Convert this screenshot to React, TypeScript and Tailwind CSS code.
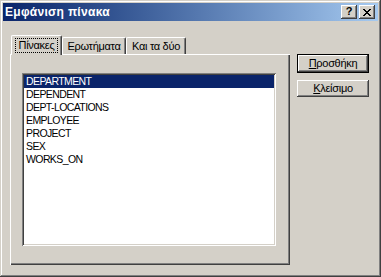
const rows = [
  'DEPARTMENT',
  'DEPENDENT',
  'DEPT-LOCATIONS',
  'EMPLOYEE',
  'PROJECT',
  'SEX',
  'WORKS_ON',
];

const raised =
  'shadow-[inset_-1px_-1px_#404040,inset_1px_1px_#ffffff,inset_-2px_-2px_#808080,inset_2px_2px_#d4d0c8]';

function CaptionButton({ children }: { children: React.ReactNode }) {
  return (
    <div className={`w-[16px] h-[14px] bg-[#d4d0c8] flex items-center justify-center ${raised}`}>
      {children}
    </div>
  );
}

export default function App() {
  return (
    <div className="w-[381px] h-[277px] bg-[#d4d0c8] p-[3px] flex flex-col font-['Liberation_Sans',Arial,sans-serif] text-black shadow-[inset_-1px_-1px_#404040,inset_1px_1px_#d4d0c8,inset_-2px_-2px_#808080,inset_2px_2px_#ffffff]">
      {/* Title bar */}
      <div className="h-[18px] flex items-center bg-gradient-to-r from-[#0a246a] to-[#a6caf0] pl-[2px] pr-[3px]">
        <span className="text-white font-bold text-[12px] tracking-[0.3px] leading-none">
          Εμφάνιση πίνακα
        </span>
        <div className="ml-auto flex gap-[2px]">
          <CaptionButton>
            <span className="text-[11px] font-bold leading-none -mt-px">?</span>
          </CaptionButton>
          <CaptionButton>
            <svg width="8" height="7" viewBox="0 0 8 7" shapeRendering="crispEdges">
              <path d="M0 0h2v1h-2zM6 0h2v1h-2zM1 1h2v1h-2zM5 1h2v1h-2zM2 2h4v1h-4zM3 3h2v1h-2zM2 4h4v1h-4zM1 5h2v1h-2zM5 5h2v1h-2zM0 6h2v1h-2zM6 6h2v1h-2z" fill="#000" />
            </svg>
          </CaptionButton>
        </div>
      </div>

      {/* Body */}
      <div className="flex pl-[7px] pt-[14px]">
        <div className="w-[280px] flex flex-col">
          {/* Tabs */}
          <div className="h-[20px] flex items-end pl-[1px] text-[11px] tracking-[-0.3px] leading-none">
            <div className="relative z-10 w-[51px] h-[20px] bg-[#d4d0c8] border-t border-l border-r border-t-white border-l-white border-r-[#404040] rounded-t-[2px] shadow-[inset_-1px_0_#808080] flex justify-center pt-[2px]">
              <span className="h-[15px] px-[3px] border border-dotted border-black flex items-center">
                Πίνακες
              </span>
            </div>
            <div className="w-[64px] h-[18px] border-t border-l border-r border-t-white border-l-white border-r-[#404040] rounded-t-[2px] shadow-[inset_-1px_0_#808080] flex justify-center pt-[3px]">
              Ερωτήματα
            </div>
            <div className="w-[60px] h-[18px] border-t border-l border-r border-t-white border-l-white border-r-[#404040] rounded-t-[2px] shadow-[inset_-1px_0_#808080] flex justify-center pt-[3px]">
              Και τα δύο
            </div>
          </div>

          {/* Panel */}
          <div className="-mt-px h-[211px] bg-[#d4d0c8] pl-[12px] pt-[19px] shadow-[inset_1px_1px_#ffffff,inset_-1px_-1px_#404040,inset_-2px_-2px_#808080]">
            <div className="w-[254px] h-[173px] bg-white p-[2px] shadow-[inset_1px_1px_#808080,inset_-1px_-1px_#ffffff,inset_2px_2px_#404040,inset_-2px_-2px_#d4d0c8]">
              {rows.map((r, i) => (
                <div
                  key={r}
                  className={`h-[13px] pl-[2px] flex items-center text-[10.5px] tracking-[-0.6px] leading-none ${
                    i === 0 ? 'bg-[#0a246a] text-white' : 'text-black'
                  }`}
                >
                  {r}
                </div>
              ))}
            </div>
          </div>
        </div>

        {/* Buttons */}
        <div className="ml-[7px] pt-[19px] flex flex-col text-[11px] tracking-[-0.3px] leading-none">
          <div className="w-[72px] h-[19px] border border-black bg-[#d4d0c8] flex items-center justify-center shadow-[inset_-1px_-1px_#404040,inset_1px_1px_#ffffff,inset_-2px_-2px_#808080]">
            <span>
              <span className="underline">Π</span>ροσθήκη
            </span>
          </div>
          <div className={`mt-[7px] w-[72px] h-[17px] bg-[#d4d0c8] flex items-center justify-center ${raised}`}>
            <span>
              <span className="underline">Κ</span>λείσιμο
            </span>
          </div>
        </div>
      </div>
    </div>
  );
}
